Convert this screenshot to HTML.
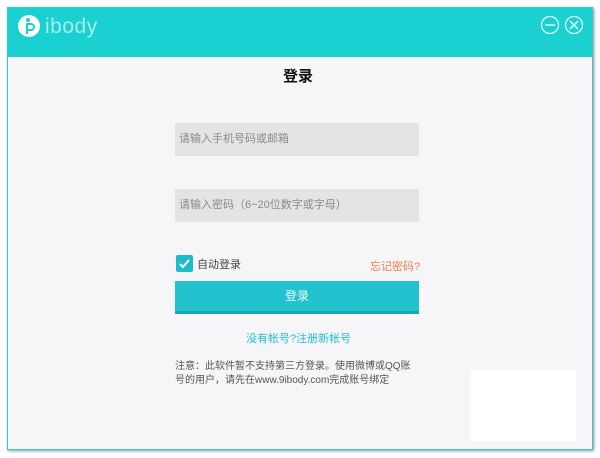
<!DOCTYPE html>
<html><head><meta charset="utf-8"><style>
body{margin:0;width:600px;height:458px;background:#fff;position:relative;overflow:hidden;font-family:"Liberation Sans","Noto Sans CJK SC",sans-serif}
.win{position:absolute;left:7px;top:7px;width:584px;height:441px;background:#f6f6f8;border:1px solid #3cc8cc;box-shadow:1px 1px 3px rgba(0,0,0,.45)}
.hdr{position:absolute;left:0;top:0;width:584px;height:49px;background:#1bd0d0}
.t{position:absolute;white-space:nowrap}
.inp{position:absolute;left:167px;width:244px;height:33px;background:#e4e4e4;color:#8a8a8a;font-size:11px;line-height:33px;padding-left:4px;box-sizing:border-box}
</style></head><body>
<div class="win">
<div class="hdr">
<svg style="position:absolute;left:10px;top:7px" width="22" height="22" viewBox="0 0 22 22"><circle cx="11" cy="11" r="11" fill="#fff"/><circle cx="10" cy="5" r="2" fill="#1bd0d0"/><path d="M9 8v11M9 9h4a3 3 0 0 1 0 6h-4" stroke="#1bd0d0" stroke-width="2" fill="none"/></svg>
<div class="t" style="left:37px;top:7px;font-size:21px;color:#a8ecec;letter-spacing:0.5px">ibody</div>
<svg style="position:absolute;left:532px;top:7px" width="46" height="20" viewBox="0 0 46 20"><circle cx="10" cy="10" r="8.5" stroke="#e0ffff" stroke-width="1.3" fill="none"/><path d="M5 10h10" stroke="#e0ffff" stroke-width="1.5"/><circle cx="34" cy="10" r="8.5" stroke="#e0ffff" stroke-width="1.3" fill="none"/><path d="M30 6l8 8M38 6l-8 8" stroke="#e0ffff" stroke-width="1.5"/></svg>
</div>
<div class="t" style="left:275px;top:57px;font-size:15px;font-weight:bold;color:#111">登录</div>
<div class="inp" style="top:115px">请输入手机号码或邮箱</div>
<div class="inp" style="top:181px">请输入密码（6~20位数字或字母）</div>
<div style="position:absolute;left:168px;top:247px;width:17px;height:17px;background:#1dbcc8;border-radius:2px"><svg width="17" height="17"><path d="M4 9l3 3 6-7" stroke="#fff" stroke-width="2" fill="none"/></svg></div>
<div class="t" style="left:189px;top:248px;font-size:11px;color:#444">自动登录</div>
<div class="t" style="left:362px;top:250px;font-size:11px;color:#f07a50">忘记密码?</div>
<div style="position:absolute;left:167px;top:273px;width:244px;height:33px;background:#22c2cf;border-bottom:3px solid #1aa8b4;box-sizing:border-box;color:#e8ffff;font-size:12px;text-align:center;line-height:30px">登录</div>
<div class="t" style="left:238px;top:322px;font-size:11px;color:#20c0d0">没有帐号?注册新帐号</div>
<div class="t" style="left:167px;top:352px;font-size:10px;color:#555;line-height:14px">注意：此软件暂不支持第三方登录。使用微博或QQ账<br>号的用户，请先在www.9ibody.com完成账号绑定</div>
<div style="position:absolute;left:462px;top:362px;width:106px;height:71px;background:#fff"></div>
</div>
</body></html>
